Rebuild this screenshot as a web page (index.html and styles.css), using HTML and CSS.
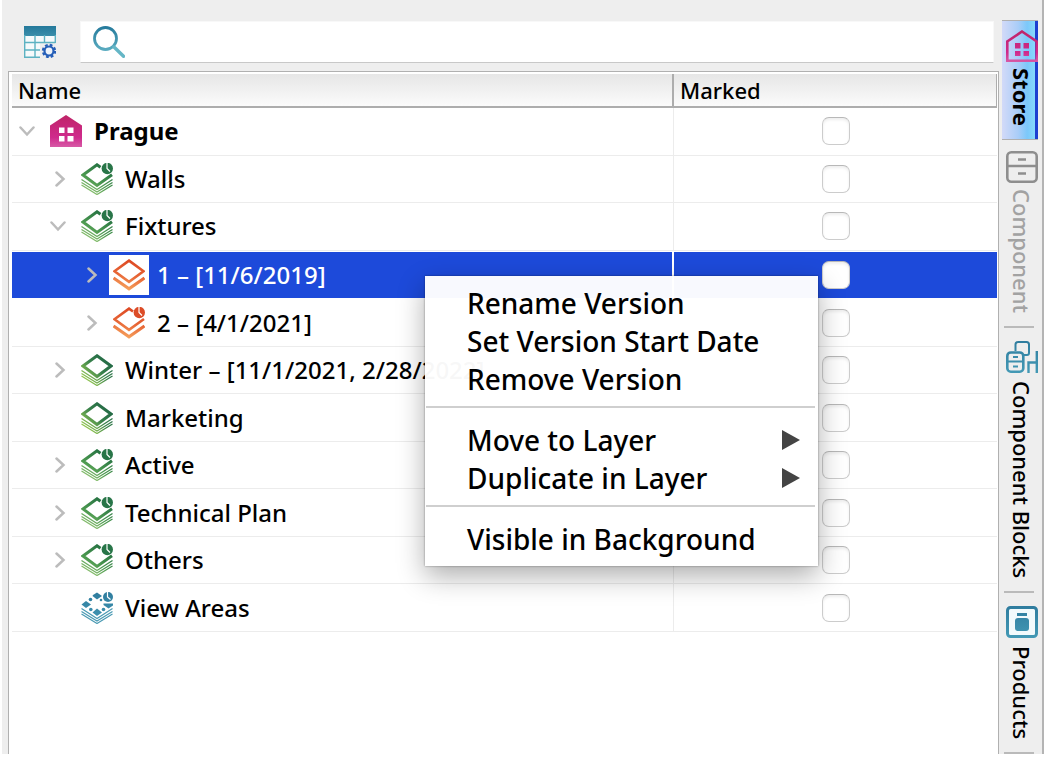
FILE: index.html
```html
<!DOCTYPE html>
<html lang="en">
<head>
  <meta charset="UTF-8" />
  <meta name="viewport" content="width=device-width, initial-scale=1.0"/>
  <title>Store Layers</title>
  <link rel="stylesheet" href="styles.css">
</head>
<body>
  <!-- Shared icon shapes -->
  <svg class="icon-defs" width="0" height="0" aria-hidden="true">
    <defs>
      <linearGradient id="teal" x1="0" y1="0" x2="0" y2="32" gradientUnits="userSpaceOnUse">
        <stop offset="0" stop-color="#24799b"/>
        <stop offset="1" stop-color="#6cbccc"/>
      </linearGradient>
      <linearGradient id="tealFlat" x1="0" y1="0" x2="0" y2="32" gradientUnits="userSpaceOnUse">
        <stop offset="0" stop-color="#2f7c9e"/>
        <stop offset="1" stop-color="#4399b5"/>
      </linearGradient>
      <linearGradient id="pink" x1="0" y1="0" x2="0" y2="32" gradientUnits="userSpaceOnUse">
        <stop offset="0" stop-color="#bf2467"/>
        <stop offset="0.7" stop-color="#cf2a8c"/>
        <stop offset="1" stop-color="#d75aa6"/>
      </linearGradient>
      <linearGradient id="green" x1="26" y1="2" x2="8" y2="32" gradientUnits="userSpaceOnUse">
        <stop offset="0" stop-color="#1f6b40"/>
        <stop offset="0.6" stop-color="#4d9a50"/>
        <stop offset="1" stop-color="#9ccb78"/>
      </linearGradient>
      <linearGradient id="lime" x1="28" y1="4" x2="6" y2="26" gradientUnits="userSpaceOnUse">
        <stop offset="0" stop-color="#1f6544"/>
        <stop offset="0.5" stop-color="#37804b"/>
        <stop offset="1" stop-color="#90c451"/>
      </linearGradient>
      <linearGradient id="orange" x1="18" y1="0" x2="12" y2="32" gradientUnits="userSpaceOnUse">
        <stop offset="0" stop-color="#dc4622"/>
        <stop offset="0.5" stop-color="#e76535"/>
        <stop offset="1" stop-color="#f7a761"/>
      </linearGradient>
    </defs>

    <symbol id="i-chevron-down" viewBox="0 0 16 16">
      <path d="M1.500 4.500L8 11.500L14.500 4.500" fill="none" stroke="#bcbcbc" stroke-width="2.500" stroke-linecap="round"/>
    </symbol>
    <symbol id="i-chevron-right" viewBox="0 0 16 16">
      <path d="M6.500 1.500L13.500 8L6.500 14.500" fill="none" stroke="#bcbcbc" stroke-width="2.500" stroke-linecap="round"/>
    </symbol>
    <symbol id="i-house" viewBox="0 0 32 32">
      <path fill="url(#pink)" fill-rule="evenodd" d="M16 0L32 10.500V32H0V10.500ZM9 12.500V18H14.500V12.500ZM17.500 12.500V18H23.500V12.500ZM9 21V26.500H14.500V21ZM17.500 21V26.500H23.500V21Z"/>
    </symbol>
    <symbol id="i-layers" viewBox="0 0 32 32">
      <g fill="none" stroke="url(#lime)">
        <path d="M16 1.800L30 12L16 22.500L2 12Z" stroke-width="3"/>
        <path d="M0.500 16.500L16 26.500L31.500 16.500M0.500 19.500L16 29L31.500 19.500M0.500 22L16 31.500L31.500 22" stroke-width="1.300"/>
      </g>
    </symbol>
    <symbol id="i-layers-clock" viewBox="0 0 32 32">
      <g fill="none" stroke="url(#green)">
        <path d="M31 11.800L16 22.500L2 12L16 1.800L19.500 4.300" stroke-width="3"/>
        <path d="M0.500 16.500L16 26.500L31.500 16.500M0.500 19.500L16 29L31.500 19.500M0.500 22L16 31.500L31.500 22" stroke-width="1.300"/>
      </g>
      <circle cx="26.300" cy="5.500" r="5.700" fill="#287548"/>
      <path d="M26 0V5.500L29 8.500" fill="none" stroke="#fff" stroke-width="1.200"/>
    </symbol>
    <symbol id="i-version" viewBox="0 0 32 32">
      <g fill="none" stroke="url(#orange)">
        <path d="M16 1.600L30.500 12.300L16 22.800L1.500 12.300Z" stroke-width="2.600"/>
        <path d="M0.500 19L16 29.800L31.500 19" stroke-width="3.200"/>
      </g>
    </symbol>
    <symbol id="i-version-clock" viewBox="0 0 32 32">
      <g fill="none" stroke="url(#orange)">
        <path d="M31 12L16 22.800L1.500 12.300L16 1.600L20 4.500" stroke-width="2.600"/>
        <path d="M0.500 19L16 29.800L31.500 19" stroke-width="3.200"/>
      </g>
      <circle cx="26.300" cy="5.500" r="5.700" fill="#dc4c27"/>
      <path d="M26 0V5.500L29 8.500" fill="none" stroke="#fff" stroke-width="1.200"/>
    </symbol>
    <symbol id="i-view-areas" viewBox="0 0 32 32">
      <g fill="url(#tealFlat)">
        <path d="M12 3L16 0.500L21 4L16 7.500L11.500 4Z"/>
        <path d="M5 9L10 12.500L5 16L0.500 12.500Z"/>
        <path d="M16 16.500L21 20.500L16 24L11.500 20.500Z"/>
        <path d="M22.500 11.500H32V13.500L27.500 16.500L22.500 13Z"/>
        <circle cx="9.500" cy="7.500" r="1.800"/>
        <circle cx="9.800" cy="17.500" r="1.800"/>
        <circle cx="22.500" cy="17.500" r="1.800"/>
        <circle cx="20" cy="8" r="1.300"/>
        <circle cx="27" cy="5" r="5"/>
      </g>
      <path d="M26.500 0V5L29.500 7.500" fill="none" stroke="#fff" stroke-width="1.200"/>
      <path d="M0.500 16.500L16 26.500L31.500 16.500M0.500 19.500L16 29L31.500 19.500M0.500 22L16 31.500L31.500 22" fill="none" stroke="#4a9ab3" stroke-width="1.200"/>
    </symbol>
  </svg>

  <div class="window">
    <main class="main">
      <div class="toolbar">
        <button class="icon-btn" type="button" aria-label="Table settings">
          <svg class="icon" viewBox="0 0 32 32">
            <path d="M0 0H32V10H0Z" fill="url(#teal)"/>
            <path d="M1 10H31V16H1ZM1 16H16V31H1Z" fill="#f6fafb"/>
            <path d="M0.700 9V31.300H16M0 16.500H31.300M0.700 24H16M11 9V31M20.500 9V16.500M31.300 9V17" fill="none" stroke="#5db2c2" stroke-width="1.400"/>
            <circle cx="25" cy="25" r="6" fill="none" stroke="#265fb8" stroke-width="2.400" stroke-dasharray="2.700 2.012"/>
            <circle cx="25" cy="25" r="4.500" fill="#eef3fa" stroke="#265fb8" stroke-width="2.200"/>
          </svg>
        </button>
        <label class="search">
          <svg class="icon" viewBox="0 0 32 32">
            <circle cx="12.500" cy="12.500" r="11" fill="none" stroke="url(#teal)" stroke-width="2.800"/>
            <path d="M21 21L30.500 30.300" fill="none" stroke="#65b6c6" stroke-width="3.400" stroke-linecap="round"/>
          </svg>
          <input type="text" aria-label="Search">
        </label>
      </div>

      <div class="panel">
        <table class="tree">
          <thead>
            <tr>
              <th class="col-name">Name</th>
              <th class="col-marked">Marked</th>
            </tr>
          </thead>
          <tbody>
            <tr>
              <td><div class="node level-0 root"><button class="toggle" type="button" aria-label="Collapse"><svg><use href="#i-chevron-down"/></svg></button><svg class="icon"><use href="#i-house"/></svg><span>Prague</span></div></td>
              <td class="mark"><input type="checkbox" aria-label="Mark Prague"></td>
            </tr>
            <tr>
              <td><div class="node level-1"><button class="toggle" type="button" aria-label="Expand"><svg><use href="#i-chevron-right"/></svg></button><svg class="icon"><use href="#i-layers-clock"/></svg><span>Walls</span></div></td>
              <td class="mark"><input type="checkbox" aria-label="Mark Walls"></td>
            </tr>
            <tr>
              <td><div class="node level-1"><button class="toggle" type="button" aria-label="Collapse"><svg><use href="#i-chevron-down"/></svg></button><svg class="icon"><use href="#i-layers-clock"/></svg><span>Fixtures</span></div></td>
              <td class="mark"><input type="checkbox" aria-label="Mark Fixtures"></td>
            </tr>
            <tr class="selected">
              <td><div class="node level-2"><button class="toggle" type="button" aria-label="Expand"><svg><use href="#i-chevron-right"/></svg></button><svg class="icon"><use href="#i-version"/></svg><span>1 – [11/6/2019]</span></div></td>
              <td class="mark"><input type="checkbox" aria-label="Mark version 1"></td>
            </tr>
            <tr>
              <td><div class="node level-2"><button class="toggle" type="button" aria-label="Expand"><svg><use href="#i-chevron-right"/></svg></button><svg class="icon"><use href="#i-version-clock"/></svg><span>2 – [4/1/2021]</span></div></td>
              <td class="mark"><input type="checkbox" aria-label="Mark version 2"></td>
            </tr>
            <tr>
              <td><div class="node level-1"><button class="toggle" type="button" aria-label="Expand"><svg><use href="#i-chevron-right"/></svg></button><svg class="icon"><use href="#i-layers"/></svg><span>Winter – [11/1/2021, 2/28/2022]</span></div></td>
              <td class="mark"><input type="checkbox" aria-label="Mark Winter"></td>
            </tr>
            <tr>
              <td><div class="node level-1"><span class="toggle"></span><svg class="icon"><use href="#i-layers"/></svg><span>Marketing</span></div></td>
              <td class="mark"><input type="checkbox" aria-label="Mark Marketing"></td>
            </tr>
            <tr>
              <td><div class="node level-1"><button class="toggle" type="button" aria-label="Expand"><svg><use href="#i-chevron-right"/></svg></button><svg class="icon"><use href="#i-layers-clock"/></svg><span>Active</span></div></td>
              <td class="mark"><input type="checkbox" aria-label="Mark Active"></td>
            </tr>
            <tr>
              <td><div class="node level-1"><button class="toggle" type="button" aria-label="Expand"><svg><use href="#i-chevron-right"/></svg></button><svg class="icon"><use href="#i-layers-clock"/></svg><span>Technical Plan</span></div></td>
              <td class="mark"><input type="checkbox" aria-label="Mark Technical Plan"></td>
            </tr>
            <tr>
              <td><div class="node level-1"><button class="toggle" type="button" aria-label="Expand"><svg><use href="#i-chevron-right"/></svg></button><svg class="icon"><use href="#i-layers-clock"/></svg><span>Others</span></div></td>
              <td class="mark"><input type="checkbox" aria-label="Mark Others"></td>
            </tr>
            <tr>
              <td><div class="node level-1"><span class="toggle"></span><svg class="icon"><use href="#i-view-areas"/></svg><span>View Areas</span></div></td>
              <td class="mark"><input type="checkbox" aria-label="Mark View Areas"></td>
            </tr>
          </tbody>
        </table>
      </div>
    </main>

    <nav class="rail">
      <button class="tab active" type="button">
        <svg class="icon" viewBox="0 0 32 32">
          <path d="M16 1.500L30.700 11.500V30.700H1.300V11.500Z" fill="none" stroke="url(#pink)" stroke-width="2.600"/>
          <path d="M9 13H14.500V18.500H9ZM17.500 13H23V18.500H17.500ZM9 21H14.500V26H9ZM17.500 21H23V26H17.500Z" fill="url(#pink)"/>
        </svg>
        <span>Store</span>
      </button>
      <button class="tab" type="button" disabled>
        <svg class="icon" viewBox="0 0 32 32" fill="none" stroke="#8e8e8e">
          <rect x="1.300" y="1.300" width="29.400" height="29.400" rx="4" stroke-width="2.600"/>
          <path d="M1 15H31M12 8.500H20M12 22.500H20" stroke-width="2.600"/>
        </svg>
        <span>Component</span>
      </button>
      <hr>
      <button class="tab" type="button">
        <svg class="icon" viewBox="0 0 32 32" fill="none" stroke="url(#tealFlat)">
          <path d="M9.500 10V3.500Q9.500 1 12 1H20.500Q23 1 23 3.500V12Q23 14 21 14H18" stroke-width="2"/>
          <rect x="1.300" y="11.500" width="16" height="19.200" rx="3.500" stroke-width="2.600"/>
          <path d="M1 20.500H17M7 16H12M7 25.500H12" stroke-width="2.200"/>
          <path d="M22.500 32V21.500H31M30.800 10V32" stroke-width="2.400"/>
        </svg>
        <span>Component Blocks</span>
      </button>
      <hr>
      <button class="tab" type="button">
        <svg class="icon" viewBox="0 0 32 32">
          <rect x="1.500" y="1.500" width="29" height="29" rx="3" fill="#f2fafc" stroke="url(#tealFlat)" stroke-width="3"/>
          <path d="M11 7H21V10H11Z" fill="url(#tealFlat)"/>
          <rect x="9" y="12" width="14" height="13" rx="3" fill="url(#tealFlat)"/>
        </svg>
        <span>Products</span>
      </button>
      <hr>
    </nav>

    <!-- Context menu for the selected version -->
    <div class="menu" role="menu">
      <button type="button" role="menuitem">Rename Version</button>
      <button type="button" role="menuitem">Set Version Start Date</button>
      <button type="button" role="menuitem">Remove Version</button>
      <hr>
      <button class="submenu" type="button" role="menuitem">Move to Layer</button>
      <button class="submenu" type="button" role="menuitem">Duplicate in Layer</button>
      <hr>
      <button type="button" role="menuitem">Visible in Background</button>
    </div>
  </div>
</body>
</html>
```
FILE: styles.css
```css
* {
  box-sizing: border-box;
  margin: 0;
  padding: 0;
}

body {
  background: #fff;
  color: #000;
  font-family: "Noto Sans", "Open Sans", sans-serif;
  font-size: 24px;
  font-weight: 500;
  padding: 0 4px 10px 2px;
}

button {
  background: none;
  border: none;
  color: inherit;
  font: inherit;
}

.icon-defs {
  position: absolute;
}

.icon {
  width: 32px;
  height: 32px;
  flex: none;
  display: block;
}

.window {
  position: relative;
  display: flex;
  min-height: calc(100vh - 10px);
  background: #eeeeee;
}

.main {
  flex: 1;
  display: flex;
  flex-direction: column;
  padding-left: 6px;
}

/* Toolbar */
.toolbar {
  display: flex;
  align-items: center;
  gap: 24px;
  padding: 21px 5px 8px 16px;
}

.search {
  flex: 1;
  display: flex;
  align-items: center;
  gap: 8px;
  height: 42px;
  padding: 0 12px;
  background: #fff;
  border: 1px solid #f8f8f8;
  border-bottom-color: #c8c8c8;
}

.search input {
  flex: 1;
  border: none;
  outline: none;
  font: inherit;
}

/* Tree table */
.panel {
  flex: 1;
  background: #fff;
  border: 1px solid #b0b0b0;
  border-bottom: none;
  padding: 2px 1px 0 3px;
}

.tree {
  width: 100%;
  height: 558px;
  border-collapse: separate;
  border-spacing: 0;
  table-layout: fixed;
}

.tree th {
  height: 34px;
  padding: 0 6px;
  background: linear-gradient(#e6e6e6, #fbfbfb);
  border-bottom: 2px solid #adadad;
  font-size: 22px;
  font-weight: 500;
  line-height: 30px;
  text-align: left;
}

.col-name,
.tree td:first-child {
  border-right: 1px solid #ececec;
}

.tree .col-name {
  border-right: 2px solid #adadad;
}

.tree .col-marked {
  width: 323px;
  border-right: 1px solid #adadad;
}

.tree td {
  border-bottom: 1px solid #ececec;
  line-height: 32px;
  white-space: nowrap;
}

.node {
  display: flex;
  align-items: center;
}

.node .icon {
  margin: 0 12px 0 15px;
}

.level-0 { padding-left: 7px; }
.level-1 { padding-left: 38px; }
.level-2 { padding-left: 70px; }

.root {
  font-weight: 700;
}

.toggle {
  width: 16px;
  height: 16px;
  flex: none;
}

.toggle svg {
  display: block;
  width: 16px;
  height: 16px;
}

.tree .selected td {
  background: #1d4ada;
  border-top: 1px solid #fff;
  border-color: #fff;
  color: #fff;
}

.tree .selected td:first-child {
  border-right-width: 2px;
}

.selected .icon {
  background: #fff;
  box-shadow: 0 0 0 4px #fff;
}

.mark {
  text-align: center;
}

.mark input {
  appearance: none;
  display: block;
  width: 28px;
  height: 28px;
  margin: 0 auto;
  background: #fff;
  border: 1px solid #cccccc;
  border-top-color: #b8b8b8;
  border-radius: 7px;
  box-shadow: inset 0 2px 3px #eeeeee;
}

/* Vertical tabs on the right */
.rail {
  width: 45px;
  display: flex;
  flex-direction: column;
  padding-top: 20px;
  padding-left: 3px;
  border-right: 2px solid #b4b4b4;
}

.rail hr {
  width: 30px;
  height: 2px;
  margin-left: 2px;
  border: none;
  background: #bababa;
}

.tab {
  display: flex;
  flex-direction: column;
  align-items: center;
  gap: 8px;
  width: 36px;
  padding: 13px 0 13px 4px;
  font-size: 22px;
  line-height: 28px;
}

.tab span {
  writing-mode: vertical-rl;
  white-space: nowrap;
}

.tab:disabled {
  gap: 6px;
  padding-top: 11px;
  color: #a2a2a2;
}

.tab.active {
  gap: 6px;
  padding-top: 9px;
  border-top: 1px solid #b0b0b0;
  border-bottom: 1px solid #b0b0b0;
  background: linear-gradient(90deg, #d3daf8, #a9cdf8 45%, #7cc8fa 70%, #86d9fc 92%, #1d3fd0 92%);
  font-weight: 700;
}

/* Context menu */
.menu {
  position: absolute;
  top: 276px;
  left: 423px;
  width: 393px;
  padding: 8px 0;
  background: rgba(255, 255, 255, 0.97);
  box-shadow: 0 0 2px rgba(0, 0, 0, 0.4), 0 10px 26px rgba(0, 0, 0, 0.32);
}

.menu button {
  display: flex;
  align-items: center;
  justify-content: space-between;
  width: 100%;
  height: 38px;
  padding: 0 18px 0 42px;
  font-size: 28px;
  line-height: 38px;
}

.menu hr {
  height: 2px;
  margin: 8px 3px 13px 1px;
  border: none;
  background: #cfcfcf;
}

.submenu::after {
  content: "";
  border: 10px solid transparent;
  border-left: 18px solid #444;
  border-right: none;
}
```
